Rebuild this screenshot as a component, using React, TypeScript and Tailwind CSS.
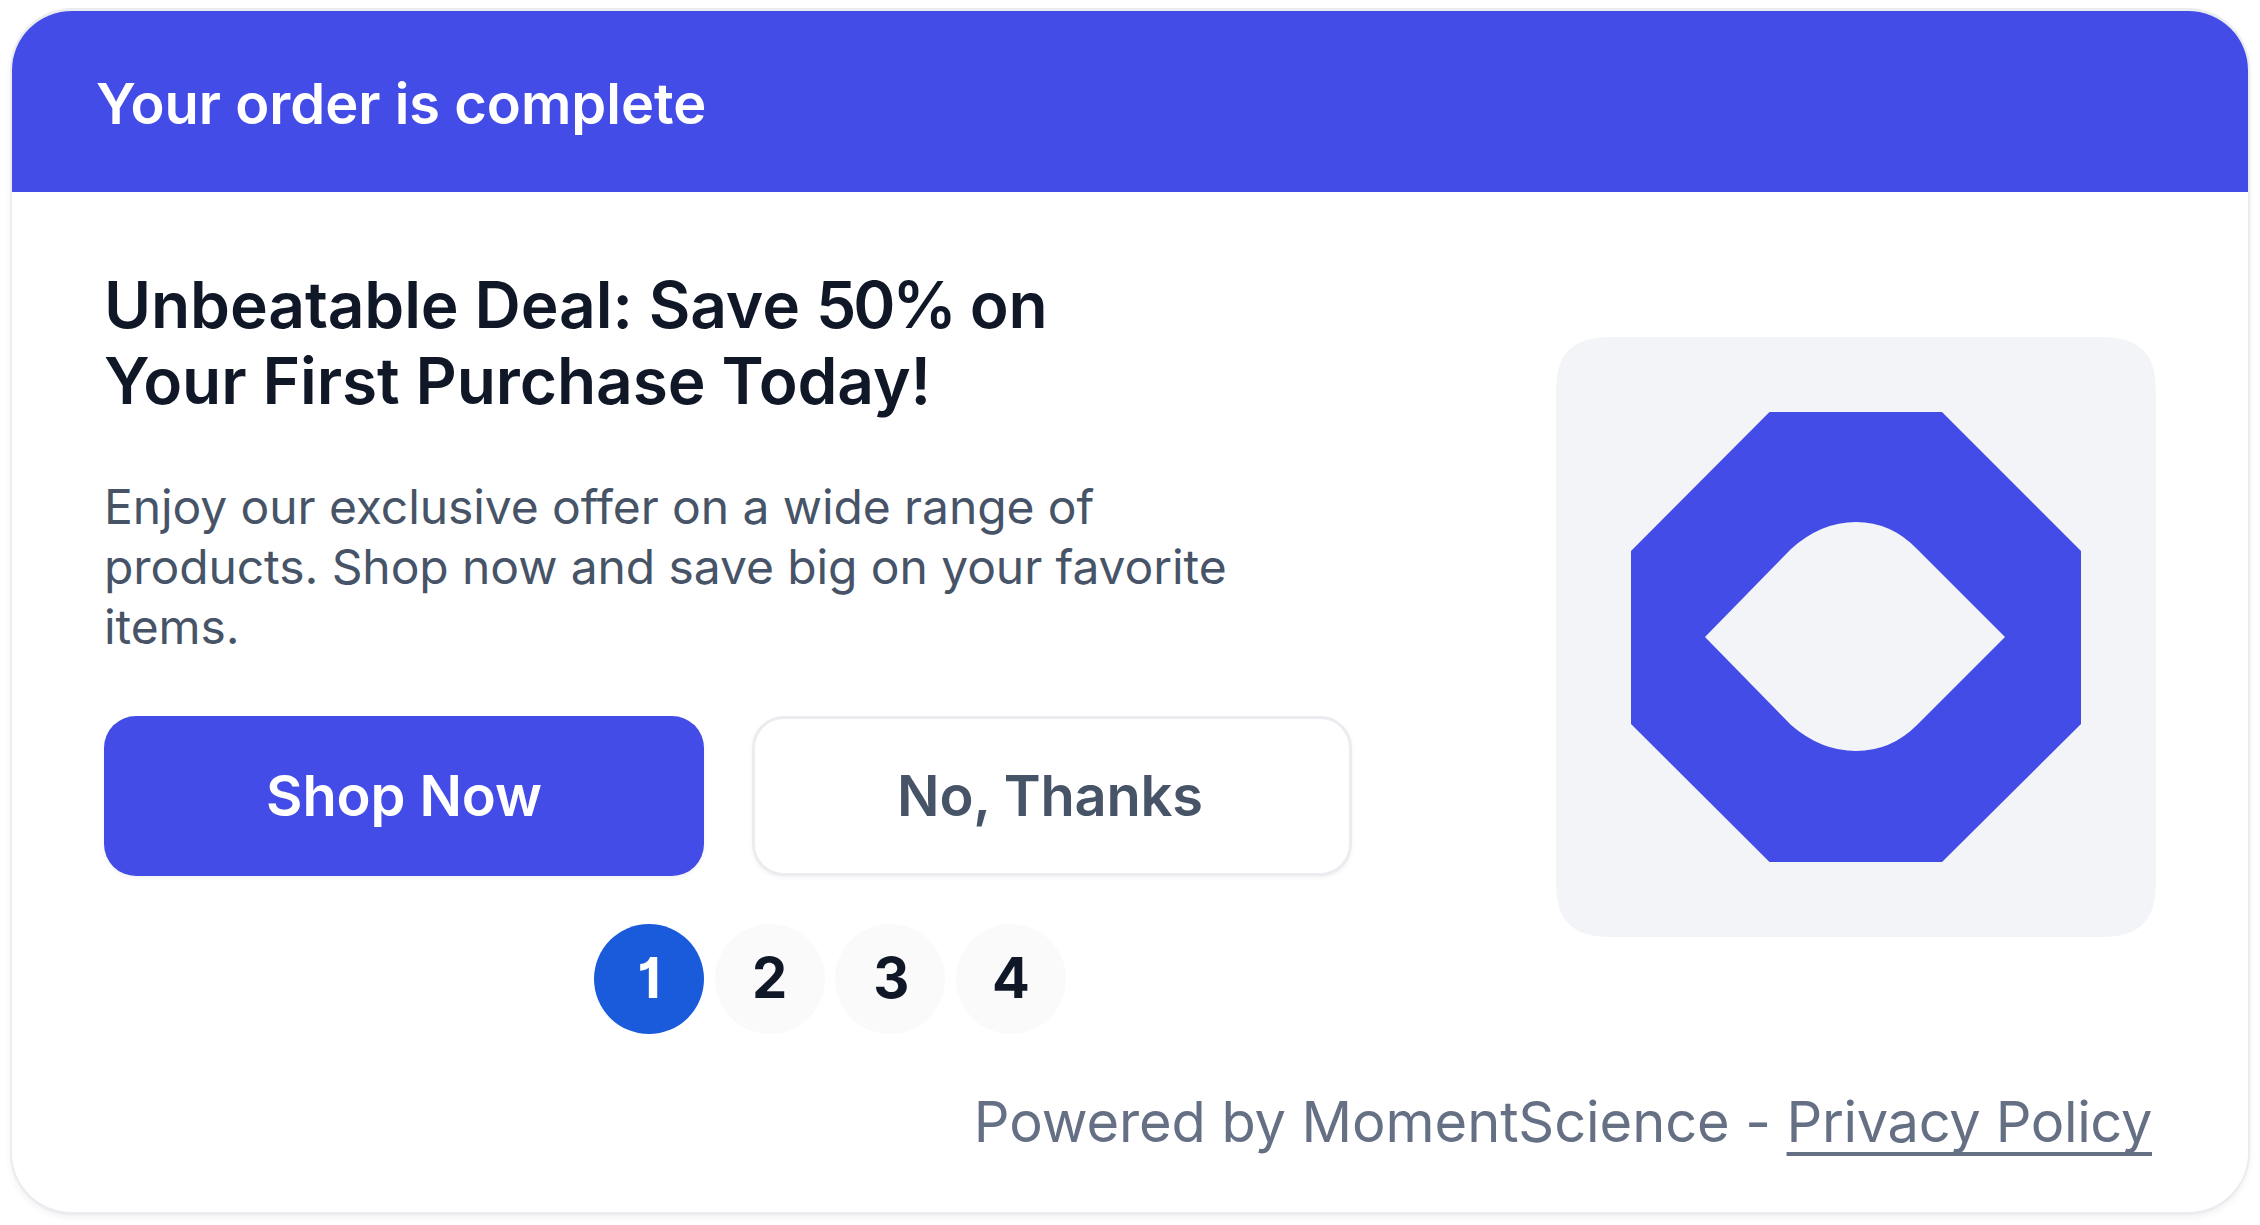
export default function App() {
  return (
    <div className="w-[2260px] h-[1225px] bg-white px-[10px] pt-[8px] pb-[10px] font-['Inter',sans-serif]">
      <div className="h-[1207px] rounded-[62px] border-x-[2px] border-t-[3px] border-b-[3px] border-[#eaecf0] bg-white overflow-hidden shadow-[0_3px_6px_rgba(16,24,40,0.05)] flex flex-col">
        <div className="h-[181px] shrink-0 bg-[#444ce7] flex items-center pl-[84px] pt-[5px]">
          <span className="text-[56px] leading-[72px] font-semibold text-white">Your order is complete</span>
        </div>
        <div className="flex-1 pl-[92px] pr-[96px] pt-[75px] flex flex-col">
          <div className="flex items-start">
            <div className="w-[1452px] shrink-0 flex flex-col">
              <h1 className="text-[64px] leading-[76px] font-semibold tracking-[-0.1px] text-[#101828]">
                Unbeatable Deal: Save <span className="tracking-[-3px]">50%</span> on
                <br />
                Your First Purchase Today!
              </h1>
              <p className="mt-[58px] w-[1200px] text-[48px] leading-[60px] tracking-[-0.09px] text-[#475467]">
                Enjoy our exclusive offer on a wide range of products. Shop now and save big on your favorite items.
              </p>
              <div className="mt-[59px] flex gap-[48px]">
                <button className="w-[600px] h-[160px] rounded-[32px] bg-[#444ce7] text-white text-[56px] font-semibold tracking-[-0.1px] shadow-[0_2px_4px_rgba(16,24,40,0.05)]">
                  Shop Now
                </button>
                <button className="w-[600px] h-[160px] rounded-[32px] border-[3px] border-[#eaecf0] bg-white text-[#475467] text-[56px] font-semibold tracking-[-0.2px] pr-[4px] shadow-[0_2px_4px_rgba(16,24,40,0.05)]">
                  No, Thanks
                </button>
              </div>
              <div className="mt-[48px] flex justify-center gap-[10.67px] [font-feature-settings:'cv01'_1]">
                <div className="w-[110px] h-[110px] pb-[2px] rounded-full bg-[#1a5bdc] text-white flex items-center justify-center text-[56px] font-bold">1</div>
                <div className="w-[110px] h-[110px] pb-[2px] rounded-full bg-[#fafafa] text-[#101828] flex items-center justify-center text-[56px] font-bold">2</div>
                <div className="w-[110px] h-[110px] pb-[2px] pl-[2px] rounded-full bg-[#fafafa] text-[#101828] flex items-center justify-center text-[56px] font-bold">3</div>
                <div className="w-[110px] h-[110px] pb-[2px] rounded-full bg-[#fafafa] text-[#101828] flex items-center justify-center text-[56px] font-bold">4</div>
              </div>
            </div>
            <div className="mt-[70px] -mr-[3px] w-[600px] h-[600px] shrink-0 rounded-[60px] [corner-shape:superellipse(1.5)] bg-[#f2f4f8] flex items-center justify-center">
              <svg width="450" height="450" viewBox="0 0 450 450">
                <path
                  fill="#444ce7"
                  fillRule="evenodd"
                  d="M138.5 0H311L450 139V312L311 450H138.5L0 312V139ZM74 225L160 137Q190 110 225 110Q260 110 286 137L374 225L286 313Q260 339 225 339Q190 339 160 313Z"
                />
              </svg>
            </div>
          </div>
          <div className="mt-[54px] text-right text-[56px] leading-[68px] tracking-[-0.09px] text-[#667085]">
            Powered by MomentScience - <span className="underline decoration-[4px] underline-offset-[10px] tracking-[-0.37px] [text-decoration-skip-ink:none]">Privacy Policy</span>
          </div>
        </div>
      </div>
    </div>
  );
}
